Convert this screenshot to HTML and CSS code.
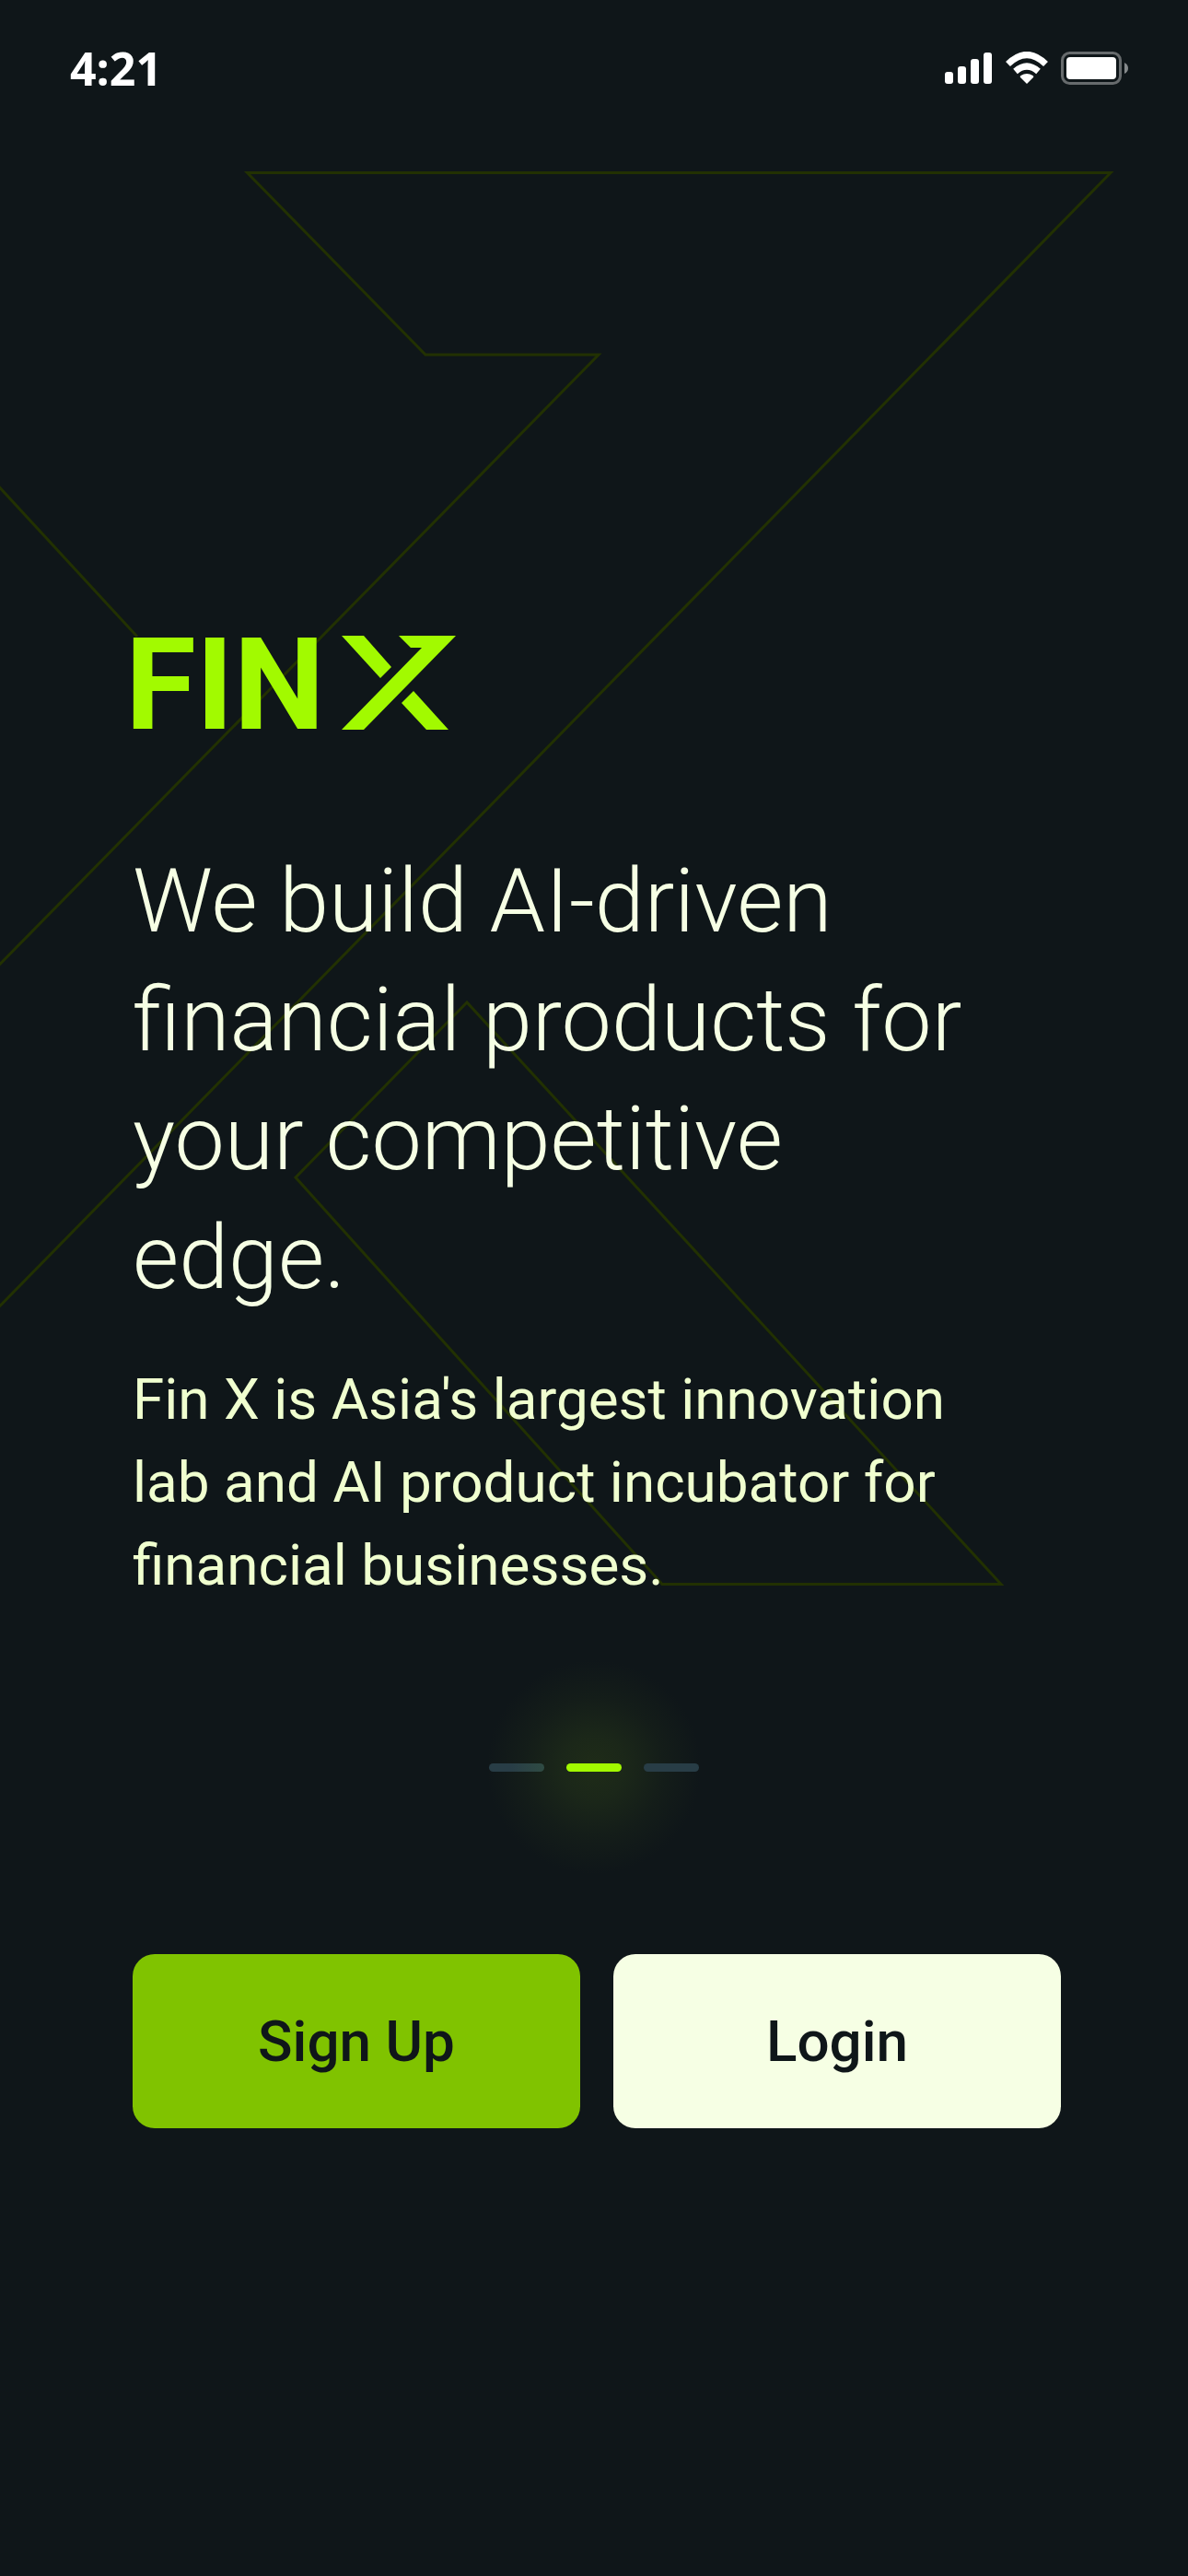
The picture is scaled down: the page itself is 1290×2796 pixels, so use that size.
FILE: index.html
```html
<!DOCTYPE html>
<html lang="en">
<head>
  <meta charset="utf-8">
  <meta name="viewport" content="width=device-width, initial-scale=1">
  <title>Fin X</title>
  <link rel="stylesheet" href="styles.css">
</head>
<body>
  <div class="screen">
    <svg class="backdrop" viewBox="0 0 1290 2796" preserveAspectRatio="xMinYMin meet" aria-hidden="true">
      <path d="M-30 1448L1206 187.500H268.500L462 385H650L-30 1077M-30 497L149 691"/>
      <path d="M507 1088L321 1278L719 1719.500H1087Z"/>
    </svg>

    <header class="status">
      <span class="status-time">4:21</span>
      <svg class="status-icons" viewBox="0 0 200 36" aria-hidden="true">
        <g fill="#fff">
          <rect x="0" y="22" width="9" height="13" rx="3"/>
          <rect x="14" y="16" width="9" height="19" rx="3"/>
          <rect x="28" y="8" width="9" height="27" rx="3"/>
          <rect x="42" y="1" width="9" height="34" rx="3"/>
          <path d="M89 35L82 28Q81 27 82.500 26Q89 22 95.500 26Q97 27 96 28Z"/>
        </g>
        <g fill="none" stroke="#fff" stroke-width="7">
          <path d="M76.500 21.500Q89 10.500 101.500 21.500"/>
          <path d="M68.500 13.500Q89 -6.500 109.500 13.500"/>
        </g>
        <rect x="127.500" y="1.500" width="63" height="33" rx="8" fill="none" stroke="#676b6d" stroke-width="3"/>
        <rect x="132" y="6" width="54" height="24" rx="4" fill="#fff"/>
        <path d="M195 12Q199 14 199 18Q199 22 195 24Z" fill="#85898b"/>
      </svg>
    </header>

    <main class="content">
      <div class="logo">
        <span class="logo-word">FIN</span>
        <svg class="logo-mark" viewBox="0 0 124 102" role="img" aria-label="X">
          <path d="M0 0H24L54 34L42 46Z"/>
          <path d="M62 0H124L24 102H0L87 13H75Z"/>
          <path d="M78 60L116 102H92L65 73Z"/>
        </svg>
      </div>

      <h1 class="headline">We build AI-driven financial products for your competitive edge.</h1>
      <p class="intro">Fin X is Asia's largest innovation lab and AI product incubator for financial businesses.</p>

      <div class="pager">
        <span class="pager-dash"></span>
        <span class="pager-dash pager-dash-active"></span>
        <span class="pager-dash"></span>
      </div>

      <div class="actions">
        <button class="button button-primary" type="button">Sign Up</button>
        <button class="button button-light" type="button">Login</button>
      </div>
    </main>
  </div>
</body>
</html>
```
FILE: styles.css
```css
* {
  box-sizing: border-box;
}

body {
  margin: 0;
  background: #0f1619;
  color: #f6ffe4;
  font-family: Roboto, "Liberation Sans", sans-serif;
}

.screen {
  position: relative;
  min-height: 100vh;
  overflow: hidden;
}

/* Outlined mark that sits behind the whole screen */
.backdrop {
  position: absolute;
  top: 0;
  left: 0;
  width: 100%;
  fill: none;
  stroke: #223102;
  stroke-width: 3;
}

.status {
  position: relative;
  display: flex;
  align-items: center;
  justify-content: space-between;
  height: 148px;
  padding: 0 64px 0 76px;
}

.status-time {
  color: #fff;
  font-family: "Open Sans", "Liberation Sans", sans-serif;
  font-size: 50px;
  font-weight: 700;
}

.status-icons {
  width: 200px;
  height: 36px;
}

.content {
  position: relative;
  padding: 542px 138px 0 144px;
}

.logo {
  display: flex;
  align-items: flex-start;
  gap: 18px;
  height: 102px;
}

.logo-word {
  margin-left: -8px;
  padding-top: 2px;
  color: #a2fa00;
  font-size: 140px;
  font-weight: 700;
  line-height: 102px;
}

.logo-mark {
  width: 124px;
  height: 102px;
  fill: #a2fa00;
}

.headline {
  max-width: 920px;
  margin: 122px 0 0;
  font-size: 97px;
  font-weight: 300;
  line-height: 129px;
}

.intro {
  max-width: 920px;
  margin: 44px 0 0;
  color: #f0ffcf;
  font-size: 62px;
  font-weight: 400;
  line-height: 90px;
}

.pager {
  display: flex;
  align-items: center;
  justify-content: center;
  gap: 24px;
  height: 240px;
  margin: 54px -138px 0 -144px;
  background: radial-gradient(circle 116px at center, #1f2c18, #1b2719 30%, #141d19 65%, #0f1619);
}

.pager-dash {
  width: 60px;
  height: 9px;
  border-radius: 5px;
  background: #283d46;
}

.pager-dash:first-child {
  background: linear-gradient(90deg, #283d46 40%, #2f4b43);
}

.pager-dash-active {
  background: #a2fa00;
}

.actions {
  display: grid;
  grid-template-columns: 1fr 1fr;
  gap: 36px;
  margin-top: 83px;
}

.button {
  height: 189px;
  border: 0;
  border-radius: 24px;
  color: #0f1619;
  font-family: inherit;
  font-size: 62px;
  font-weight: 500;
}

.button-primary {
  background: #80c300;
}

.button-light {
  background: #f6ffe4;
}
```
